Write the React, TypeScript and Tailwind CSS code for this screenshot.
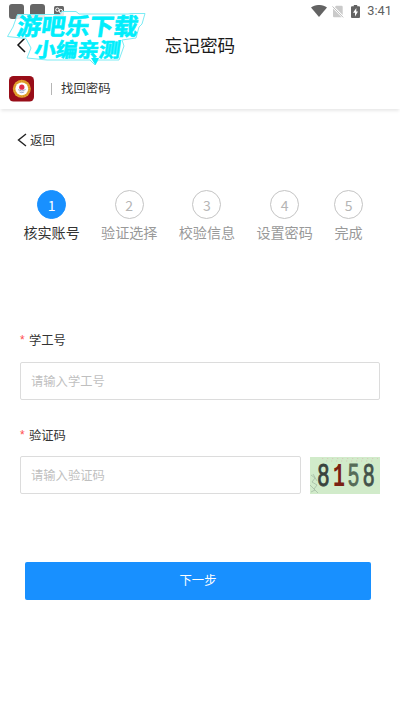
import React, { useState } from 'react';

interface Step {
  id: number;
  title: string;
}

const steps: Step[] = [
  { id: 1, title: '核实账号' },
  { id: 2, title: '验证选择' },
  { id: 3, title: '校验信息' },
  { id: 4, title: '设置密码' },
  { id: 5, title: '完成' },
];

const StatusBar = () => (
  <div className="flex h-[22px] items-center justify-between pl-[9px] pr-[8px]">
    <div className="flex items-center">
      <span className="h-[15px] w-[15px] rounded-[3px] bg-[#666]" />
      <span className="ml-[6px] h-[15px] w-[15px] rounded-[3px] bg-[#666]" />
      <svg className="ml-[9px]" width="10" height="10" viewBox="0 0 10 10">
        <rect width="10" height="10" rx="1.5" fill="#666" />
        <circle cx="3.4" cy="3.7" r="1.7" fill="none" stroke="#fff" />
        <circle cx="6.8" cy="5" r="1.7" fill="none" stroke="#fff" />
      </svg>
    </div>
    <div className="flex items-center">
      <svg width="16" height="12" viewBox="0 0 16 12">
        <path d="M0 2.6C4.6-.9 11.4-.9 16 2.6L8 12Z" fill="#636363" />
      </svg>
      <svg className="ml-[5px]" width="12" height="13" viewBox="0 0 12 13">
        <path d="M4.2.8H9.5a1.2 1.2 0 0 1 1.2 1.2V10L2.8 2.1ZM1 3.5 9.7 12.3H2A1 1 0 0 1 1 11.3Z" fill="#cacaca" />
        <path d="M.5 1.4 11.2 12.4" stroke="#bdbdbd" />
      </svg>
      <svg className="ml-[7px]" width="9" height="13" viewBox="0 0 9 13">
        <path d="M2.8 0h3.4v1.3H8a1 1 0 0 1 1 1V12a1 1 0 0 1-1 1H1a1 1 0 0 1-1-1V2.3a1 1 0 0 1 1-1h1.8Z" fill="#636363" />
        <path d="M5.3 3 2 7.8h2V11.4L7 6.6H5.3Z" fill="#fff" />
      </svg>
      <span className="ml-[7px] font-['Roboto',sans-serif] text-[12.8px] leading-none text-[#606060]">3:41</span>
    </div>
  </div>
);

const Watermark = () => (
  <svg className="pointer-events-none absolute left-0 top-0" width="160" height="70" viewBox="0 0 160 70">
    <path
      d="M17.5 14.5H60L62 11.5H76L79 14H128L131 13.5H145L142 24L139 27L136 38L122 40L124 46L119 60H98L95 65L90 60H47L27 58L31 48L26 38.5L7.5 36.5L13 27Z"
      fill="#fff"
      fillOpacity=".85"
      stroke="#7cebf4"
      strokeWidth="1"
    />
    <g
      fill="#00eefc"
      stroke="#00eefc"
      strokeWidth=".6"
      fontFamily="'Noto Sans CJK SC', sans-serif"
      fontWeight="700"
    >
      <text transform="translate(16 34.8) skewX(-8)" fontSize="23.5" textLength="121" lengthAdjust="spacingAndGlyphs">游吧乐下载</text>
      <text transform="translate(33.5 56.8) skewX(-8)" fontSize="20" textLength="86" lengthAdjust="spacingAndGlyphs">小编亲测</text>
    </g>
    <path d="M91 58H99L95.3 65Z" fill="#00eefc" />
  </svg>
);

const SchoolLogo = () => (
  <svg width="26" height="26" viewBox="0 0 26 26">
    <rect x="0" y="0" width="25" height="25.5" rx="4.5" fill="#980d18" />
    <circle cx="12.8" cy="12.8" r="9" fill="#e3a52e" />
    <circle cx="12.8" cy="12.8" r="7.6" fill="none" stroke="#c8731f" strokeWidth=".7" strokeDasharray="1 1.4" />
    <circle cx="12.8" cy="12.8" r="6.4" fill="#fff" />
    <circle cx="12.8" cy="11.2" r="2.6" fill="#e02b48" />
    <path d="M9 13.6Q12.8 16.4 16.6 13.6M10.4 16Q12.8 17.4 15.2 16" fill="none" stroke="#8795bb" strokeWidth=".8" />
  </svg>
);

const Captcha = () => (
  <svg className="overflow-visible" width="70" height="37" viewBox="0 0 70 37">
    <rect width="70" height="37" fill="#d1ebca" />
    <path d="M12 1.5H68M16 4H65" stroke="#d8c2b6" strokeWidth=".8" strokeDasharray="1.2 3.8" />
    <path d="M1 18 5 21 2 25 7 28 4 32 8 36M0 28 5 33 1 35M3 17 7 24" fill="none" stroke="#a4bda4" strokeWidth=".8" />
    <g fontFamily="'Liberation Sans', sans-serif" fontSize="32" strokeWidth=".9" textAnchor="middle">
      <text transform="translate(13.3 28.6) scale(.66 1)" fill="#38423c" stroke="#38423c">8</text>
      <text
        transform="translate(29 28.6) scale(.62 1.04)"
        fill="#7b2113"
        fontFamily="'Liberation Mono', monospace"
        fontWeight="700"
      >
        1
      </text>
      <text transform="translate(43.6 28.6) scale(.62 1)" fill="#566b57" stroke="#566b57">5</text>
      <text transform="translate(58.7 28.6) scale(.64 1)" fill="#435149" stroke="#435149">8</text>
    </g>
  </svg>
);

const FieldLabel = ({ children }: { children: React.ReactNode }) => (
  <label className="flex h-5 items-center text-[12.3px] text-[#333]">
    <span className="mr-[4px] w-[5px] font-['Liberation_Sans',sans-serif] text-[12px] text-[#ff4d4f]">*</span>
    {children}
  </label>
);

const inputClass =
  'h-[38px] min-w-0 rounded-[2px] border border-[#dcdcdc] bg-white px-[10px] text-[12.3px] text-[#333] outline-none placeholder:text-[#bfbfbf]';

const App = () => {
  const [current] = useState(1);
  const [account, setAccount] = useState('');
  const [code, setCode] = useState('');

  return (
    <div className="relative h-[712px] w-[400px] overflow-hidden bg-white font-['Noto_Sans_CJK_SC',sans-serif]">
      <StatusBar />

      {/* Title bar */}
      <header className="flex h-[46px] items-center">
        <button className="ml-[16px] flex w-[20px]">
          <svg width="10" height="16" viewBox="0 0 10 16">
            <path d="M9 1 2 8 9 15" fill="none" stroke="#111" strokeWidth="1.5" />
          </svg>
        </button>
        <h1 className="flex-1 pr-[36px] text-center text-[17.6px] leading-none text-[#1a1a1a]">忘记密码</h1>
      </header>

      <div className="flex h-[41px] items-center pl-[9px] shadow-[0_3px_3px_-1px_rgba(0,0,0,0.09)]">
        <SchoolLogo />
        <span className="ml-[16px] h-[12px] w-px bg-[#b5b5b5]" />
        <span className="ml-[9px] text-[12.4px] text-[#333]">找回密码</span>
      </div>

      <button className="mt-[21px] flex h-5 items-center pl-[17px] text-[12.4px] text-[#333]">
        <svg width="10" height="14" viewBox="0 0 10 14">
          <path d="M9 1 1.5 7 9 13" fill="none" stroke="#222" strokeWidth="1.4" />
        </svg>
        <span className="ml-[3px]">返回</span>
      </button>

      <div className="mt-[40px] flex gap-[21.3px] pl-[23.4px]">
        {steps.map((step) => {
          const active = step.id === current;
          return (
            <div key={step.id} className="flex flex-col items-center">
              <span
                className={`flex h-[29px] w-[29px] items-center justify-center rounded-full border text-[14px] leading-none ${
                  active ? 'border-[#1890ff] bg-[#1890ff] text-white' : 'border-[#c4c4c4] text-[#b5b5b5]'
                }`}
              >
                {step.id}
              </span>
              <span
                className={`mt-[3px] whitespace-nowrap text-[14.1px] leading-[20px] ${
                  active ? 'text-[#333]' : 'text-[#999]'
                }`}
              >
                {step.title}
              </span>
            </div>
          );
        })}
      </div>

      <form className="mt-[88px] flex flex-col px-[20px]" onSubmit={(e) => e.preventDefault()}>
        <FieldLabel>学工号</FieldLabel>
        <input
          className={`mt-[12px] w-full ${inputClass}`}
          placeholder="请输入学工号"
          value={account}
          onChange={(e) => setAccount(e.target.value)}
        />

        <div className="mt-[25px]">
          <FieldLabel>验证码</FieldLabel>
        </div>
        <div className="mt-[11px] flex items-center gap-[9px]">
          <input
            className={`flex-1 ${inputClass}`}
            placeholder="请输入验证码"
            value={code}
            onChange={(e) => setCode(e.target.value)}
          />
          <Captcha />
        </div>

        <button className="ml-[5px] mr-[9px] mt-[68px] h-[38px] rounded-[2px] bg-[#1890ff] pb-px text-[12.3px] text-white">
          下一步
        </button>
      </form>

      <Watermark />
    </div>
  );
};

export default App;
